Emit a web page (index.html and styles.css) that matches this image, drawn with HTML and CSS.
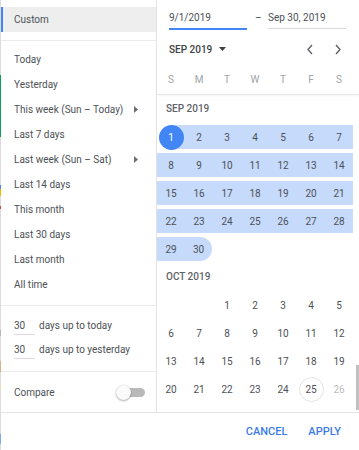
FILE: index.html
```html
<!DOCTYPE html>
<html>
<head>
<meta charset="utf-8">
<link rel="stylesheet" href="styles.css">
</head>
<body>
<div class="edge"></div>
<div class="popup">
  <div class="main">
    <aside class="sidebar">
      <div class="custom">Custom</div>
      <div class="sep sep-first"></div>
      <ul class="presets">
        <li>Today</li>
        <li>Yesterday</li>
        <li class="sub">This week (Sun – Today)<svg class="caret-r" width="4" height="7" viewBox="0 0 4 7"><path d="M0 0L4 3.5L0 7Z"/></svg></li>
        <li>Last 7 days</li>
        <li class="sub">Last week (Sun – Sat)<svg class="caret-r" width="4" height="7" viewBox="0 0 4 7"><path d="M0 0L4 3.5L0 7Z"/></svg></li>
        <li>Last 14 days</li>
        <li>This month</li>
        <li>Last 30 days</li>
        <li>Last month</li>
        <li>All time</li>
      </ul>
      <div class="sep"></div>
      <div class="relative">
        <div class="rel-row"><span class="num">30</span><span class="rel-label">days up to today</span></div>
        <div class="rel-row"><span class="num">30</span><span class="rel-label">days up to yesterday</span></div>
      </div>
      <div class="sep"></div>
      <div class="compare">
        <span>Compare</span>
        <span class="switch"><span class="knob"></span><span class="track"></span></span>
      </div>
    </aside>
    <section class="calendar">
      <div class="inputs">
        <div class="date-in active">9/1/2019</div>
        <div class="dash">–</div>
        <div class="date-in">Sep 30, 2019</div>
      </div>
      <div class="month-nav">
        <span class="month-title">SEP 2019</span>
        <svg class="caret-d" width="7" height="4" viewBox="0 0 7 4"><path d="M0 0H7L3.5 4Z"/></svg>
        <span class="nav-btns">
          <span class="nav-btn"><svg width="8" height="11" viewBox="0 0 8 11"><path d="M6 1L2 5.5L6 10" fill="none" stroke="#5f6368" stroke-width="1.4"/></svg></span>
          <span class="nav-btn"><svg width="8" height="11" viewBox="0 0 8 11"><path d="M2 1L6 5.5L2 10" fill="none" stroke="#5f6368" stroke-width="1.4"/></svg></span>
        </span>
      </div>
      <div class="weekdays">
        <span>S</span><span>M</span><span>T</span><span>W</span><span>T</span><span>F</span><span>S</span>
      </div>
      <div class="scroll">
        <div class="months">
          <div class="month-label">SEP 2019</div>
          <div class="grid">
            <span class="cell"><span class="d in start"><span class="circle sel">1</span></span></span>
            <span class="cell"><span class="d in">2</span></span>
            <span class="cell"><span class="d in">3</span></span>
            <span class="cell"><span class="d in">4</span></span>
            <span class="cell"><span class="d in">5</span></span>
            <span class="cell"><span class="d in">6</span></span>
            <span class="cell"><span class="d in">7</span></span>
            <span class="cell"><span class="d in">8</span></span>
            <span class="cell"><span class="d in">9</span></span>
            <span class="cell"><span class="d in">10</span></span>
            <span class="cell"><span class="d in">11</span></span>
            <span class="cell"><span class="d in">12</span></span>
            <span class="cell"><span class="d in">13</span></span>
            <span class="cell"><span class="d in">14</span></span>
            <span class="cell"><span class="d in">15</span></span>
            <span class="cell"><span class="d in">16</span></span>
            <span class="cell"><span class="d in">17</span></span>
            <span class="cell"><span class="d in">18</span></span>
            <span class="cell"><span class="d in">19</span></span>
            <span class="cell"><span class="d in">20</span></span>
            <span class="cell"><span class="d in">21</span></span>
            <span class="cell"><span class="d in">22</span></span>
            <span class="cell"><span class="d in">23</span></span>
            <span class="cell"><span class="d in">24</span></span>
            <span class="cell"><span class="d in">25</span></span>
            <span class="cell"><span class="d in">26</span></span>
            <span class="cell"><span class="d in">27</span></span>
            <span class="cell"><span class="d in">28</span></span>
            <span class="cell"><span class="d in">29</span></span>
            <span class="cell"><span class="d in end">30</span></span>
          </div>
          <div class="month-label">OCT 2019</div>
          <div class="grid">
            <span class="cell"></span>
            <span class="cell"></span>
            <span class="cell"><span class="d">1</span></span>
            <span class="cell"><span class="d">2</span></span>
            <span class="cell"><span class="d">3</span></span>
            <span class="cell"><span class="d">4</span></span>
            <span class="cell"><span class="d">5</span></span>
            <span class="cell"><span class="d">6</span></span>
            <span class="cell"><span class="d">7</span></span>
            <span class="cell"><span class="d">8</span></span>
            <span class="cell"><span class="d">9</span></span>
            <span class="cell"><span class="d">10</span></span>
            <span class="cell"><span class="d">11</span></span>
            <span class="cell"><span class="d">12</span></span>
            <span class="cell"><span class="d">13</span></span>
            <span class="cell"><span class="d">14</span></span>
            <span class="cell"><span class="d">15</span></span>
            <span class="cell"><span class="d">16</span></span>
            <span class="cell"><span class="d">17</span></span>
            <span class="cell"><span class="d">18</span></span>
            <span class="cell"><span class="d">19</span></span>
            <span class="cell"><span class="d">20</span></span>
            <span class="cell"><span class="d">21</span></span>
            <span class="cell"><span class="d">22</span></span>
            <span class="cell"><span class="d">23</span></span>
            <span class="cell"><span class="d">24</span></span>
            <span class="cell"><span class="d"><span class="circle today">25</span></span></span>
            <span class="cell"><span class="d off">26</span></span>
          </div>
        </div>
        <div class="scrollbar"><div class="thumb"></div></div>
      </div>
    </section>
  </div>
  <div class="footer">
    <span class="btn">CANCEL</span>
    <span class="btn">APPLY</span>
  </div>
</div>
</body>
</html>
```
FILE: styles.css
```css
* { box-sizing: border-box; }
html, body { margin: 0; padding: 0; }
body {
  width: 359px;
  height: 450px;
  display: flex;
  overflow: hidden;
  background: #fff;
  font-family: Roboto, "Liberation Sans", sans-serif;
  font-size: 10px;
  color: #4d5156;
}
.edge {
  width: 1px;
  flex: none;
  background: linear-gradient(to bottom,
    #dcdcdc 0 75px, #0f9d58 75px 137px, #dcdcdc 137px 185px,
    #4285f4 185px 189px, #f4b400 189px 196px, #dcdcdc 196px 206px,
    #db4437 206px 209px, #dcdcdc 209px 330px, #b5b5b5 330px 336px,
    #dcdcdc 336px 361px, #d4b483 361px 372px, #dcdcdc 372px 385px,
    #f0d9b5 385px 390px, #dcdcdc 390px 434px, #7baaf7 434px 444px,
    #dcdcdc 444px);
}
.popup {
  flex: 1;
  display: flex;
  flex-direction: column;
}
.main {
  display: flex;
  height: 412px;
  flex: none;
}
.sidebar {
  width: 156px;
  flex: none;
  border-right: 1px solid #e3e3e3;
  padding-top: 7px;
}
.custom {
  height: 25px;
  line-height: 25px;
  background: #eeeeee;
  border-left: 2px solid #4285f4;
  padding-left: 11px;
}
.sep {
  height: 1px;
  background: #ececec;
}
.sep-first { margin-top: 8px; }
.presets {
  list-style: none;
  margin: 0;
  padding: 6px 0 8px;
}
.presets li {
  height: 25px;
  display: flex;
  align-items: center;
  padding-left: 13px;
  padding-right: 18px;
}
.caret-r {
  margin-left: auto;
  fill: #6a6e73;
}
.relative {
  padding: 8px 0 9px 13px;
}
.rel-row {
  height: 24px;
  display: flex;
  align-items: flex-start;
}
.num {
  width: 21px;
  margin-top: 4px;
  margin-right: 4px;
  height: 17px;
  line-height: 16px;
  border-bottom: 1px solid #dadada;
}
.rel-label { line-height: 24px; }
.compare {
  height: 40px;
  display: flex;
  align-items: center;
  justify-content: space-between;
  padding: 0 11px 0 13px;
}
.switch {
  display: flex;
  align-items: center;
}
.knob {
  width: 15px;
  height: 15px;
  border-radius: 50%;
  background: #fafafa;
  box-shadow: 0 1px 2px rgba(0,0,0,.3), 0 0 1px rgba(0,0,0,.2);
  position: relative;
  z-index: 1;
}
.track {
  width: 24px;
  height: 9px;
  border-radius: 5px;
  background: #b9b9b9;
  margin-left: -10px;
}
.calendar {
  flex: 1;
  display: flex;
  flex-direction: column;
  min-width: 0;
}
.inputs {
  display: flex;
  align-items: flex-start;
  padding: 8px 0 0 12px;
}
.date-in {
  width: 78px;
  height: 21px;
  line-height: 20px;
  border-bottom: 1px solid #dadada;
}
.date-in.active {
  height: 22px;
  border-bottom: 2px solid #4285f4;
}
.dash {
  width: 6px;
  margin: 0 7px 0 8px;
  line-height: 20px;
}
.month-nav {
  height: 26px;
  margin-top: 6px;
  display: flex;
  align-items: center;
  padding: 0 7px 0 12px;
}
.month-title { font-weight: 500; color: #3c4043; }
.caret-d {
  margin-left: 7px;
  fill: #3c4043;
}
.nav-btns {
  margin-left: auto;
  display: flex;
}
.nav-btn {
  width: 28px;
  height: 26px;
  display: flex;
  align-items: center;
  justify-content: center;
}
.weekdays {
  display: grid;
  grid-template-columns: repeat(7, 28px);
  padding: 6px 0 2px;
  border-bottom: 1px solid #e8e8e8;
  box-shadow: 0 1px 2px rgba(0,0,0,.05);
  color: #a0a4a8;
}
.weekdays span {
  height: 24px;
  line-height: 24px;
  text-align: center;
}
.scroll {
  flex: 1;
  display: flex;
  overflow: hidden;
}
.months {
  width: 196px;
  flex: none;
  overflow: hidden;
}
.month-label {
  height: 28px;
  line-height: 28px;
  padding-left: 9px;
  font-weight: 500;
  color: #5f6368;
}
.grid {
  display: grid;
  grid-template-columns: repeat(7, 28px);
  grid-auto-rows: 28px;
}
.cell {
  padding: 2px 0;
}
.d {
  display: flex;
  align-items: center;
  justify-content: center;
  height: 24px;
}
.d.in { background: #c6dafc; }
.d.in.start { background: linear-gradient(to right, transparent 50%, #c6dafc 50%); }
.d.in.end { border-radius: 0 12px 12px 0; margin-right: 1px; }
.d.off { color: #bdbdbd; }
.circle {
  width: 25px;
  height: 25px;
  border-radius: 50%;
  display: flex;
  align-items: center;
  justify-content: center;
  flex: none;
}
.circle.sel { background: #4285f4; color: #fff; }
.circle.today { border: 1px solid #e3e3e3; }
.scrollbar {
  flex: 1;
  display: flex;
  justify-content: flex-end;
}
.thumb {
  width: 3px;
  height: 45px;
  margin-top: 270px;
  background: #c1c1c1;
}
.footer {
  flex: 1;
  border-top: 1px solid #e3e3e3;
  display: flex;
  align-items: center;
  justify-content: flex-end;
  gap: 21px;
  padding-right: 18px;
}
.btn {
  font-size: 11px;
  font-weight: 500;
  color: #3b7be8;
}
```
